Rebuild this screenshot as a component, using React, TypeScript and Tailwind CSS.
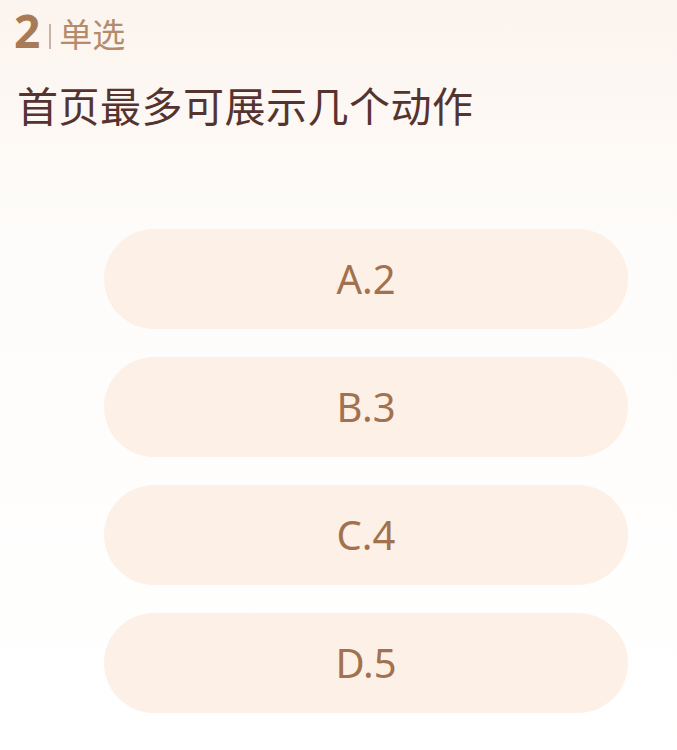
const options = ['A.2', 'B.3', 'C.4', 'D.5'];

export default function App() {
  return (
    <div
      className="w-full min-h-[750px] bg-gradient-to-b from-[#fcf4ee] via-[#fefcfa] via-30% to-white"
      style={{ fontFamily: '"Noto Sans", "Noto Sans CJK SC", sans-serif' }}
    >
      {/* header */}
      <div className="flex items-center pl-[14px] pt-[4px] h-[56px]">
        <span className="text-[46px] font-bold leading-none text-[#a87a55]">2</span>
        <span className="ml-[9px] mt-[12px] w-[2px] h-[25px] bg-[#c9b3a3]" />
        <span className="ml-[8px] mt-[8px] text-[33px] leading-none text-[#b48c6c]">单选</span>
      </div>

      {/* question */}
      <h1 className="mt-[30px] pl-[17px] text-[41px] leading-none font-normal text-[#553430] tracking-[0.5px]">
        首页最多可展示几个动作
      </h1>

      {/* options */}
      <div className="mt-[102px] flex flex-col gap-[28px] ml-[104px] w-[524px]">
        {options.map((o) => (
          <button
            key={o}
            className="h-[100px] rounded-full bg-[#fdf0e7] flex items-center justify-center text-[40px] font-normal text-[#a2714f]"
          >
            {o}
          </button>
        ))}
      </div>
    </div>
  );
}
